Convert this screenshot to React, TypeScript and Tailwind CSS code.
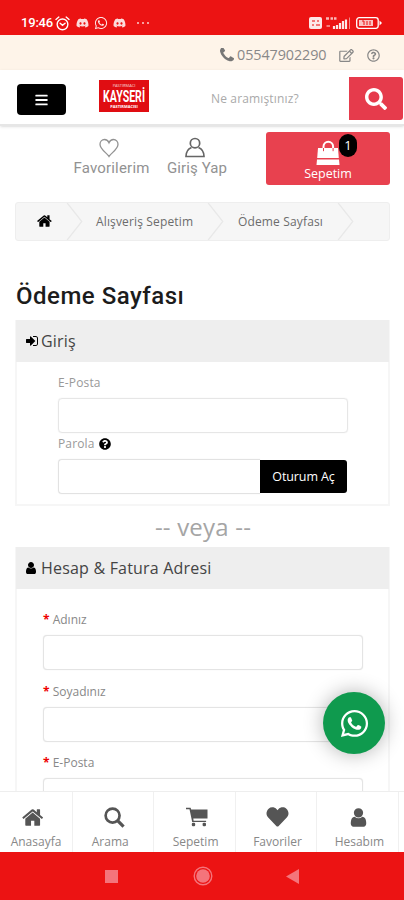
import type { ReactNode } from "react";
import {
  FaBars,
  FaDiscord,
  FaHeart,
  FaQuestionCircle,
  FaRegEdit,
  FaRegQuestionCircle,
  FaSearch,
  FaWhatsapp,
} from "react-icons/fa";

interface IconProps {
  className?: string;
}

const HomeIcon = ({ className }: IconProps) => (
  <svg viewBox="0 0 1792 1792" fill="currentColor" className={className}>
    <path d="M1408 992v480q0 26-19 45t-45 19h-384v-384h-256v384h-384q-26 0-45-19t-19-45v-480q0-1 .5-3t.5-3l575-474 575 474q1 2 1 6zm223-69l-62 74q-8 9-21 11h-3q-13 0-21-7l-692-577-692 577q-12 8-24 7-13-2-21-11l-62-74q-8-10-7-23.5t11-21.5l719-599q32-26 76-26t76 26l244 204v-195q0-14 9-23t23-9h192q14 0 23 9t9 23v408l219 182q10 8 11 21.5t-7 23.5z" />
  </svg>
);

const UserIcon = ({ className }: IconProps) => (
  <svg viewBox="192 128 1408 1536" fill="currentColor" className={className}>
    <path d="M1536 1399q0 109-62.5 187t-150.5 78h-854q-88 0-150.5-78t-62.5-187q0-85 8.5-160.5t31.5-152 58.5-131 94-89 134.5-34.5q131 128 313 128t313-128q76 0 134.5 34.5t94 89 58.5 131 31.5 152 8.5 160.5zm-256-887q0 159-112.5 271.5t-271.5 112.5-271.5-112.5-112.5-271.5 112.5-271.5 271.5-112.5 271.5 112.5 112.5 271.5z" />
  </svg>
);

const PhoneIcon = ({ className }: IconProps) => (
  <svg viewBox="192 192 1408 1408" fill="currentColor" className={className}>
    <path d="M1600 1240q0 27-10 70.5t-21 68.5q-21 50-122 106-94 51-186 51-27 0-53-3.5t-57.5-12.5-47-14.5-55.5-20.5-49-18q-98-35-175-83-127-79-264-216t-216-264q-48-77-83-175-3-9-18-49t-20.5-55.5-14.5-47-12.5-57.5-3.5-53q0-92 51-186 56-101 106-122 25-11 68.5-21t70.5-10q14 0 21 3 18 6 53 76 11 19 30 54t35 63.5 31 53.5q3 4 17.5 25t21.5 35.5 7 28.5q0 20-28.5 50t-62 55-62 53-28.5 46q0 9 5 22.5t8.5 20.5 14 24 11.5 19q76 137 174 235t235 174q2 1 19 11.5t24 14 20.5 8.5 22.5 5q18 0 46-28.5t53-62 55-62 50-28.5q14 0 28.5 7t35.5 21.5 25 17.5q25 15 53.5 31t63.5 35 54 30q70 35 76 53 3 7 3 21z" />
  </svg>
);

const SignInIcon = ({ className }: IconProps) => (
  <svg viewBox="0 0 1792 1792" fill="currentColor" className={className}>
    <path d="M1312 896q0 26-19 45l-544 544q-19 19-45 19t-45-19-19-45v-288h-448q-26 0-45-19t-19-45v-384q0-26 19-45t45-19h448v-288q0-26 19-45t45-19 45 19l544 544q19 19 19 45zm352-352v704q0 119-84.5 203.5t-203.5 84.5h-320q-13 0-22.5-9.5t-9.5-22.5q0-4-1-20t-.5-26.5 3-23.5 10-19.5 20.5-6.5h320q66 0 113-47t47-113v-704q0-66-47-113t-113-47h-312l-11.5-1-11.5-3-8-5.5-7-9-2-13.5q0-4-1-20t-.5-26.5 3-23.5 10-19.5 20.5-6.5h320q119 0 203.5 84.5t84.5 203.5z" />
  </svg>
);

const AlarmIcon = ({ className }: IconProps) => (
  <svg
    viewBox="0 0 14 14"
    fill="none"
    stroke="currentColor"
    strokeWidth={1.3}
    strokeLinecap="round"
    className={className}
  >
    <circle cx="7" cy="7.8" r="5" />
    <path d="M.9 3.2 3.6 1M13.1 3.2 10.4 1M4.8 6.8 7 8.7l2.4-2" />
  </svg>
);

const BagIcon = ({ className }: IconProps) => (
  <svg viewBox="0 0 26 26" className={className}>
    <path d="M8.5 11V6.5a4.8 4.8 0 0 1 9.6 0V11" fill="none" stroke="white" strokeWidth={2} />
    <path d="M3 8h20l.8 10H2.2z" fill="white" />
    <path d="M2 19.5h22l.5 5.5h-23z" fill="white" />
    <path d="M8.5 8v3.2M18.1 8v3.2" stroke="#e8414f" strokeWidth={1} />
  </svg>
);

const MagnifierIcon = ({ className }: IconProps) => (
  <svg viewBox="0 0 22 22" fill="none" stroke="currentColor" className={className}>
    <circle cx="9" cy="9" r="7.3" strokeWidth={2.8} />
    <path d="m14.5 14.5 6 6" strokeWidth={3.4} />
  </svg>
);

const CartIcon = ({ className }: IconProps) => (
  <svg viewBox="0 0 22 20" fill="currentColor" className={className}>
    <path d="M0 .8h4.600L5.200 2.500H21.500v9H7.300l.3 2.300h12.500v1.200H6.200L3.500 2.300H0z" />
    <rect x="5.800" y="15.700" width="3.400" height="3.600" rx="1.200" />
    <rect x="16.600" y="15.700" width="3.400" height="3.600" rx="1.200" />
  </svg>
);

const StatusBar = () => (
  <div className="flex h-[35px] shrink-0 items-center bg-[#ec1313] pt-[11px] pl-[21px] text-white">
    <span className="w-[34px] font-['Roboto'] text-[13px] leading-4 font-medium tracking-[-0.2px]">
      19:46
    </span>
    <AlarmIcon className="h-[15px] w-[15px]" />
    <FaDiscord className="ml-[6px] h-3 w-[13px] opacity-85" />
    <FaWhatsapp className="ml-[5px] h-[14px] w-[14px] opacity-90" />
    <FaDiscord className="ml-[5px] h-3 w-[13px] opacity-85" />
    <div className="ml-[11px] flex gap-[3px] opacity-80">
      <i className="size-[2px] rounded-full bg-white" />
      <i className="size-[2px] rounded-full bg-white" />
      <i className="size-[2px] rounded-full bg-white" />
    </div>
    <svg viewBox="0 0 76 14" className="ml-auto h-[14px] w-[76px]">
      {/* Network speed */}
      <rect x="1" y="1" width="13" height="12" rx="2" fill="#fff" opacity=".9" />
      <path d="M4 5h3M9 5h2M4 9h2M8 9h4" stroke="#ec1313" strokeWidth="1.4" opacity=".7" />
      {/* Signal */}
      <path d="M18 2.5h3M22.5 2.5h2.5M26 2.5h2.5" stroke="#fff" strokeWidth="2.4" opacity=".7" />
      <path d="M18.5 10h3.5" stroke="#fff" strokeWidth="2" opacity=".45" />
      <path d="M26 13v-3M29 13V9M32 13V7M35 13V5M38 13V3.5" stroke="#fff" strokeWidth="2.2" opacity=".9" />
      <path d="M41.5 13V1.5" stroke="#fff" strokeWidth="1" opacity=".5" />
      {/* Battery */}
      <rect x="48.7" y="1.7" width="21.5" height="10.6" rx="2.5" fill="none" stroke="#fff" strokeWidth="1.3" />
      <rect x="51" y="4" width="14" height="6" fill="#fff" opacity=".75" />
      <path d="M54 5h2v4M59 5v4M62 5v4" stroke="#ec1313" strokeWidth="1" fill="none" />
      <path d="M71.5 4.5 74 7l-2.5 2.5z" fill="#fff" />
    </svg>
    <div className="w-[20px]" />
  </div>
);

const ContactStrip = () => (
  <div className="flex h-[35px] shrink-0 items-center bg-[#fef4e9] pt-[5px] pl-[220px] text-[#888]">
    <PhoneIcon className="h-[14px] w-[14px] text-[#777]" />
    <span className="ml-[3px] w-[90px] text-[14.4px] leading-5 tracking-[-0.1px]">05547902290</span>
    <FaRegEdit className="ml-[12px] h-[13px] w-[15px]" />
    <FaRegQuestionCircle className="ml-[13px] h-[13px] w-[13px]" />
  </div>
);

const Logo = () => (
  <svg viewBox="0 0 50 32" textAnchor="middle" fill="white" className="h-[32px] w-[50px]">
    <rect width="50" height="32" fill="#e00d12" />
    <text x="25" y="7" opacity=".8" className="text-[4px]">
      PASTIRMACI
    </text>
    <text
      x="25"
      y="21.5"
      textLength="42"
      lengthAdjust="spacingAndGlyphs"
      className="font-['Roboto'] text-[16px] font-bold"
    >
      KAYSERİ
    </text>
    <text x="25" y="28" className="text-[4px] font-bold">
      PASTIRMACISI
    </text>
  </svg>
);

const Header = () => (
  <header className="flex h-[56px] shrink-0 items-center border-b-2 border-[#e6e6e6] bg-white pl-[17px] shadow-sm">
    <button
      aria-label="Menü"
      className="mt-[5px] flex h-[31px] w-[49px] items-center justify-center rounded-[4px] bg-black text-white"
    >
      <FaBars className="h-[14px] w-[13px]" />
    </button>
    <div className="-mt-[2px] ml-[33px]">
      <Logo />
    </div>
    <input
      placeholder="Ne aramıştınız?"
      className="mt-[3px] ml-[49px] h-[43px] w-[151px] pl-[13px] text-[12px] tracking-[0.15px] outline-none placeholder:text-[#aaa]"
    />
    <button
      aria-label="Ara"
      className="mt-[3px] flex h-[43px] w-[54px] items-center justify-center rounded-r-[3px] bg-[#e63b4c] text-white"
    >
      <FaSearch className="h-[22px] w-[22px]" />
    </button>
  </header>
);

const AccountLinks = () => (
  <div className="flex h-[76px] shrink-0 pt-[6px] text-[#929292]">
    <div className="ml-[70px] flex w-[83px] flex-col items-center pt-[6px]">
      <svg viewBox="0 0 20 20" fill="none" stroke="currentColor" strokeWidth={1.3} className="-ml-[6px] h-5 w-5">
        <path d="M10 18.5C8 15 1 11.5 1 6.3 1 3.5 3 1.5 5.5 1.5 7.5 1.5 9.2 2.8 10 4.800c.8-2 2.500-3.300 4.500-3.300C17 1.500 19 3.500 19 6.300 19 11.500 12 15 10 18.500z" />
      </svg>
      <span className="font-['Roboto'] text-[15px] leading-5 tracking-[0.2px]">Favorilerim</span>
    </div>
    <div className="ml-[9px] flex w-[70px] flex-col items-center pt-[5px]">
      <svg viewBox="0 0 20 21" fill="none" stroke="#666" strokeWidth={1.7} className="-ml-[4px] h-[21px] w-5">
        <circle cx="10" cy="6.2" r="4.7" />
        <path d="M6.500 10.500C3 12 1 14.500 1 19.500h18c0-5-2-7.500-5.500-9" />
      </svg>
      <span className="font-['Roboto'] text-[15px] leading-5 tracking-[0.1px] whitespace-nowrap">
        Giriş Yap
      </span>
    </div>
    <button className="relative ml-[34px] flex h-[53px] w-[124px] flex-col items-center rounded-[3px] bg-[#e8414f] pt-[8px] text-white">
      <BagIcon className="h-[26px] w-[26px]" />
      <span className="text-[12.5px] leading-4">Sepetim</span>
      <span className="absolute top-[2px] left-[73px] flex h-[23px] w-[18px] items-center justify-center rounded-full bg-black text-[13px]">
        1
      </span>
    </button>
  </div>
);

const Chevron = ({ className }: IconProps) => (
  <svg viewBox="0 0 18 38" fill="none" stroke="#e8e8e8" strokeWidth={1.3} className={className}>
    <path d="M1 0 16 19 1 38" />
  </svg>
);

const Breadcrumb = () => (
  <nav className="mr-[14px] ml-[15px] flex h-[39px] shrink-0 items-center rounded-[3px] border border-[#eee] bg-[#f6f6f6] text-[12px] tracking-[0.15px] text-[#6c6c6c]">
    <HomeIcon className="mb-px ml-[21px] h-[16px] w-[16px] text-black" />
    <Chevron className="ml-[13px] h-[37px] w-[18px]" />
    <span className="ml-[12px] w-[98px] whitespace-nowrap">Alışveriş Sepetim</span>
    <Chevron className="ml-[13px] h-[37px] w-[18px]" />
    <span className="ml-[13px] w-[86px] whitespace-nowrap">Ödeme Sayfası</span>
    <Chevron className="ml-[13px] h-[37px] w-[18px]" />
  </nav>
);

interface PanelProps {
  icon: ReactNode;
  title: string;
  children: ReactNode;
}

const Panel = ({ icon, title, children }: PanelProps) => (
  <section className="mr-[14px] ml-[15px] border-2 border-t-0 border-[#f6f6f6] bg-white">
    <h2 className="-mx-px flex h-[42px] items-center bg-[#eee] pl-[9px] text-[16px] tracking-[0.2px] text-[#444]">
      <span className="w-[16px]">{icon}</span>
      {title}
    </h2>
    {children}
  </section>
);

const Field = ({ label }: { label: string }) => (
  <label className="block h-[71.5px] text-[12px] leading-4 text-[#888]">
    <span className="font-bold text-[#e00]">*</span> {label}
    <input className="mt-[7px] block h-[35px] w-[320px] rounded-[4px] border-[1.5px] border-[#e4e4e4] bg-white px-3 shadow-[0_0_1px_#ddd] outline-none" />
  </label>
);

const FIELDS = ["Adınız", "Soyadınız", "E-Posta"];

const CheckoutForms = () => (
  <>
    <h1 className="mt-[38px] ml-[16px] h-[41px] font-['Roboto'] text-[24px] leading-[34px] font-medium tracking-[0.5px] text-[#1c1c1c]">
      Ödeme Sayfası
    </h1>
    <Panel icon={<SignInIcon className="h-[14px] w-[14px] text-black" />} title="Giriş">
      <div className="h-[142px] pt-[13px] pl-[41px] text-[12px] leading-4 tracking-[0.15px] text-[#999]">
        <p>E-Posta</p>
        <input className="mt-[7px] block h-[35px] w-[290px] rounded-[4px] border-[1.5px] border-[#e6e6e6] px-3 shadow-[0_0_1px_#ddd] outline-none" />
        <p className="mt-[3px] flex items-center">
          Parola
          <FaQuestionCircle className="ml-1 h-[12px] w-[12px] text-black" />
        </p>
        <div className="mt-[7px] flex">
          <input
            type="password"
            className="h-[35px] w-[202px] rounded-l-[4px] border-[1.5px] border-r-0 border-[#e2e2e2] px-3 shadow-[0_0_1px_#ddd] outline-none"
          />
          <button className="mt-px h-[33px] w-[87px] rounded-r-[3px] bg-black text-[12.5px] tracking-[-0.1px] text-white">
            Oturum Aç
          </button>
        </div>
      </div>
    </Panel>
    <p className="h-[41px] pl-[2px] text-center text-[24px] leading-[41px] tracking-[0.2px] text-[#a5a5a5]">
      -- veya --
    </p>
    <Panel icon={<UserIcon className="h-[12px] w-[12px] text-black" />} title="Hesap & Fatura Adresi">
      <div className="flex h-[400px] flex-col pt-[23px] pl-[26px]">
        {FIELDS.map((label) => (
          <Field key={label} label={label} />
        ))}
      </div>
    </Panel>
  </>
);

const TABS = [
  {
    label: "Anasayfa",
    icon: <HomeIcon className="h-[23px] w-[23px]" />,
    align: "w-[73px] pr-[5px]",
    text: "pl-[5px]",
  },
  {
    label: "Arama",
    icon: <MagnifierIcon className="h-[21px] w-[21px]" />,
    align: "w-[81.4px] pl-[3px]",
    text: "pr-[9px]",
  },
  {
    label: "Sepetim",
    icon: <CartIcon className="h-[20px] w-[22px]" />,
    align: "w-[81.4px] pl-[5px]",
    text: "pr-[3px]",
  },
  {
    label: "Favoriler",
    icon: <FaHeart className="h-[22px] w-[23px]" />,
    align: "w-[81.4px] pl-[3px]",
    text: "",
  },
  {
    label: "Hesabım",
    icon: <UserIcon className="h-[19px] w-[17px]" />,
    align: "w-[81.4px] pl-[3px]",
    text: "pl-[1px]",
  },
];

const TabBar = () => (
  <nav className="flex h-[61px] shrink-0 border-t border-[#eee] bg-white text-[#555]">
    {TABS.map((tab) => (
      <a
        key={tab.label}
        className={`flex shrink-0 flex-col items-center border-r border-[#f0f0f0] pt-[13px] ${tab.align}`}
      >
        <span className="flex h-6 items-center">{tab.icon}</span>
        <span className={`mt-[5px] text-[12px] leading-4 text-[#888] ${tab.text}`}>{tab.label}</span>
      </a>
    ))}
  </nav>
);

const SystemNav = () => (
  <div className="flex h-[48px] shrink-0 items-center bg-[#ec1313] pl-[105px]">
    <i className="h-[13px] w-[13px] bg-[#f4747b]" />
    <svg viewBox="0 0 20 20" className="ml-[75px] h-5 w-5">
      <circle cx="10" cy="10" r="8.8" fill="none" stroke="#f4747b" strokeWidth="1.4" />
      <circle cx="10" cy="10" r="6.8" fill="#f4747b" />
    </svg>
    <svg viewBox="0 0 13 15" className="ml-[73px] h-[15px] w-[13px]">
      <path d="M0 7.5 13 0v15z" fill="#f4747b" />
    </svg>
  </div>
);

const App = () => (
  <div className="relative flex h-[900px] w-[404px] flex-col overflow-hidden bg-white font-['Open_Sans',sans-serif]">
    <StatusBar />
    <ContactStrip />
    <Header />
    <AccountLinks />
    <Breadcrumb />
    <main className="min-h-0 flex-1 overflow-hidden">
      <CheckoutForms />
    </main>
    <TabBar />
    <SystemNav />
    {/* Floating chat button */}
    <button
      aria-label="WhatsApp"
      className="absolute top-[692px] left-[323px] flex size-[62px] items-center justify-center rounded-full bg-[#0f9a4e] text-white shadow-[0_0_20px_rgba(0,0,0,0.3)]"
    >
      <FaWhatsapp className="h-[31px] w-[31px]" />
    </button>
  </div>
);

export default App;
